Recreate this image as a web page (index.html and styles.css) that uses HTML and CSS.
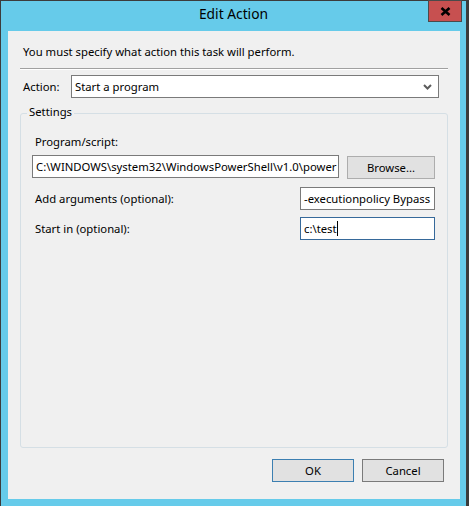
FILE: index.html
```html
<!DOCTYPE html>
<html>
<head>
<meta charset="utf-8">
<link rel="stylesheet" href="styles.css">
</head>
<body>
<div class="window">
  <div class="titlebar">
    <span class="spacer"></span>
    <span class="title">Edit Action</span>
    <span class="caption-buttons">
      <span class="close-btn">
        <svg width="11" height="9" viewBox="0 0 11 9"><path d="M1.5 1 L9.5 8 M9.5 1 L1.5 8" stroke="#000" stroke-width="2.6" fill="none"/></svg>
      </span>
    </span>
  </div>
  <div class="client">
    <p class="intro">You must specify what action this task will perform.</p>
    <div class="separator"></div>
    <div class="action-row">
      <span class="label">Action:</span>
      <div class="select">
        <span class="select-text">Start a program</span>
        <svg class="chevron" width="9" height="6" viewBox="0 0 9 6"><path d="M1 1 L4.5 4.5 L8 1" stroke="#5c5c5c" stroke-width="2" fill="none"/></svg>
      </div>
    </div>
    <div class="groupbox">
      <span class="group-caption">Settings</span>
      <div class="field-label">Program/script:</div>
      <div class="program-row">
        <div class="textbox program-box">C:\WINDOWS\system32\WindowsPowerShell\v1.0\power</div>
        <div class="button browse">Browse...</div>
      </div>
      <div class="field-row args-row">
        <span class="field-label inline">Add arguments (optional):</span>
        <div class="textbox small-box">-executionpolicy Bypass</div>
      </div>
      <div class="field-row start-row">
        <span class="field-label inline">Start in (optional):</span>
        <div class="textbox small-box focused">c:\test<span class="caret"></span></div>
      </div>
    </div>
    <div class="buttons">
      <div class="button default">OK</div>
      <div class="button">Cancel</div>
    </div>
  </div>
</div>
</body>
</html>
```
FILE: styles.css
```css
html, body {
  margin: 0;
  padding: 0;
}
body {
  background: #3a3a3a;
  font-family: "Noto Sans", "Open Sans", sans-serif;
  font-size: 11.3px;
  line-height: 16px;
  color: #000;
  overflow: hidden;
  height: 506px;
}
.window {
  width: 465px;
  height: 520px;
  background: #66cbea;
  border: 1px solid #3c3c3c;
  border-bottom: none;
}
.titlebar {
  height: 30px;
  display: grid;
  grid-template-columns: 1fr auto 1fr;
  align-items: start;
}
.title {
  font-size: 13.8px;
  line-height: 20px;
  margin-top: 3px;
  color: #000;
}
.caption-buttons {
  display: flex;
  justify-content: flex-end;
  margin-top: -1px;
  padding-right: 4px;
}
.close-btn {
  width: 32px;
  height: 20px;
  background: #c75050;
  border: 1px solid #4a4a4a;
  display: flex;
  align-items: center;
  justify-content: center;
}
.client {
  margin-left: 7px;
  width: 452px;
  height: 468px;
  background: #f0f0f0;
  box-sizing: border-box;
  padding: 13px 12px 0 12px;
}
.intro {
  margin: 0;
  padding-left: 3px;
}
.separator {
  margin-top: 8px;
  height: 1px;
  background: #a0a0a0;
  border-bottom: 1px solid #ffffff;
}
.action-row {
  margin-top: 5px;
  display: flex;
  align-items: center;
}
.label {
  padding-left: 3px;
  width: 48px;
}
.select {
  width: 368px;
  height: 23px;
  box-sizing: border-box;
  border: 1px solid #7a7a7a;
  background: #fff;
  display: flex;
  align-items: center;
  padding: 0 6px 0 3px;
}
.select-text {
  flex: 1;
}
.groupbox {
  margin-top: 15px;
  height: 335px;
  box-sizing: border-box;
  border: 1px solid #d5dfe5;
  border-radius: 3px;
  padding: 0 12px 0 11px;
}
.group-caption {
  display: block;
  width: fit-content;
  margin-top: -10px;
  margin-left: -5px;
  padding: 0 2px;
  background: #f0f0f0;
}
.field-label {
  padding-left: 3px;
  margin-top: 14px;
}
.field-label.inline {
  margin-top: 0;
  flex: 1;
}
.program-row {
  margin-top: 5px;
  display: flex;
  gap: 8px;
  align-items: flex-start;
}
.textbox {
  height: 23px;
  box-sizing: border-box;
  border: 1px solid #7a7a7a;
  background: #fff;
  padding: 0 3px;
  line-height: 21px;
  white-space: nowrap;
  overflow: hidden;
}
.program-box {
  width: 307px;
}
.small-box {
  width: 135px;
}
.textbox.focused {
  border-color: #36699a;
}
.caret {
  display: inline-block;
  width: 1px;
  height: 15px;
  background: #000;
  vertical-align: -3px;
}
.button {
  width: 82px;
  height: 23px;
  box-sizing: border-box;
  border: 1px solid #7a7a7a;
  background: #e1e1e1;
  text-align: center;
  line-height: 21px;
}
.browse {
  width: 88px;
  margin-top: 1px;
  border-color: #adadad;
}
.field-row {
  display: flex;
  align-items: center;
}
.args-row {
  margin-top: 8px;
}
.start-row {
  margin-top: 7px;
}
.buttons {
  margin-top: 11px;
  display: flex;
  justify-content: flex-end;
  gap: 8px;
  padding-right: 4px;
}
.button.default {
  border-color: #3c7fb1;
}
```
